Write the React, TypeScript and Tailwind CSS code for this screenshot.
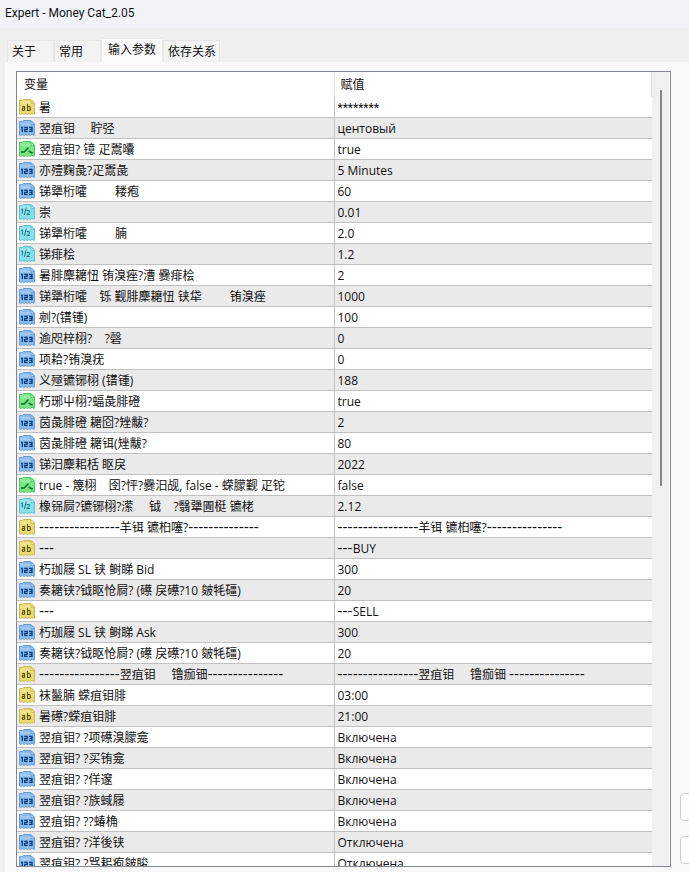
import React from "react";

type Kind = "text" | "int" | "bool" | "real";

type Param = { kind: Kind; name: string; value: string };

const params: Param[] = [
  { kind: "text", name: "暑", value: "********" },
  { kind: "int", name: "翌疽钼     聍弪", value: "центовый" },
  { kind: "bool", name: "翌疽钼? 镱 疋鬻囔", value: "true" },
  { kind: "int", name: "亦殪麴彘?疋鬻彘", value: "5 Minutes" },
  { kind: "int", name: "锑犟桁嚯         耧疱", value: "60" },
  { kind: "real", name: "崇", value: "0.01" },
  { kind: "real", name: "锑犟桁嚯         腩", value: "2.0" },
  { kind: "real", name: "锑痱桧", value: "1.2" },
  { kind: "int", name: "暑腓麇耱忸 铕溴痤?漕 爨痱桧", value: "2" },
  { kind: "int", name: "锑犟桁嚯    铄 觐腓麇耱忸 铗牮         铕溴痤", value: "1000" },
  { kind: "int", name: "剜?(镨锺)", value: "100" },
  { kind: "int", name: "逾咫梓栩?    ?磬", value: "0" },
  { kind: "int", name: "项耠?铕溴疣", value: "0" },
  { kind: "int", name: "义殛镳铘栩 (镨锺)", value: "188" },
  { kind: "bool", name: "朽琊屮栩?蝠彘腓磴", value: "true" },
  { kind: "int", name: "茵彘腓磴 耱囵?矬黻?", value: "2" },
  { kind: "int", name: "茵彘腓磴 耱铒(矬黻?", value: "80" },
  { kind: "int", name: "锑汨麇耜栝 眍戾", value: "2022" },
  { kind: "bool", name: "true - 篾栩    囹?怦?爨汨觇, false - 蝾朦觐 疋铊", value: "false" },
  { kind: "real", name: "橡铞屙?镳铘栩?潆     钺    ?翳犟圊梃 镳栳", value: "2.12" },
  { kind: "text", name: "----------------羊铒 镳桕噻?--------------", value: "----------------羊铒 镳桕噻?---------------" },
  { kind: "text", name: "---", value: "---BUY" },
  { kind: "int", name: "朽珈屦 SL 铗 鲥睇 Bid", value: "300" },
  { kind: "int", name: "奏耱铗?钺眍怆屙? (礤 戾礤?10 皴牦礓)", value: "20" },
  { kind: "text", name: "---", value: "---SELL" },
  { kind: "int", name: "朽珈屦 SL 铗 鲥睇 Ask", value: "300" },
  { kind: "int", name: "奏耱铗?钺眍怆屙? (礤 戾礤?10 皴牦礓)", value: "20" },
  { kind: "text", name: "----------------翌疽钼     镥痂钿---------------", value: "----------------翌疽钼     镥痂钿 ---------------" },
  { kind: "text", name: "袜鬣腩 蝾疽钼腓", value: "03:00" },
  { kind: "text", name: "暑礤?蝾疽钼腓", value: "21:00" },
  { kind: "int", name: "翌疽钼? ?项礤溴朦龛", value: "Включена" },
  { kind: "int", name: "翌疽钼? ?买铕龛", value: "Включена" },
  { kind: "int", name: "翌疽钼? ?佯邃", value: "Включена" },
  { kind: "int", name: "翌疽钼? ?族蜮屦", value: "Включена" },
  { kind: "int", name: "翌疽钼? ??蝽桷", value: "Включена" },
  { kind: "int", name: "翌疽钼? ?洋後铗", value: "Отключена" },
  { kind: "int", name: "翌疽钼? ?骂耜疱皴睃", value: "Отключена" },
];

const tones: Record<Kind, { fill: string; light: string; edge: string; ink: string }> = {
  text: { fill: "#e8db73", light: "#f4eb9a", edge: "#c9ba55", ink: "#5f5212" },
  int: { fill: "#86b9ec", light: "#acd1f5", edge: "#6a9fd6", ink: "#0b3f7e" },
  bool: { fill: "#78e584", light: "#a4f2aa", edge: "#55c463", ink: "#0f6a20" },
  real: { fill: "#86dfe9", light: "#b0eef3", edge: "#62c0cd", ink: "#0d6d80" },
};

function KindIcon({ kind }: { kind: Kind }) {
  const t = tones[kind];
  const stroke = { fill: "none", stroke: t.ink, strokeWidth: 1.1 };
  return (
    <svg width="16" height="16" viewBox="0 0 16 16" className="block shrink-0" aria-hidden="true">
      <path
        d="M.5 1.5h3l1-1h7.5l3.5 3.5v11l-1 .5-1.5-1.5-1.5 1.5-1.5-1-1.5 1-2-1-1.5 1-1.5-1-2 1-1-.5z"
        fill={t.fill}
        stroke={t.edge}
      />
      <path d="M1.5 2.5h10v3h-10z" fill={t.light} opacity=".7" />
      <path d="M12 1v3.5h3.5z" fill={t.light} stroke={t.edge} strokeWidth=".8" />
      {kind === "text" && (
        <g {...stroke}>
          <path d="M3 7.5h2.5v4M5.5 9.2H3.8q-1.2 1.1 0 2.3h1.7" />
          <path d="M8.5 4.8v6.7h2.3q1.2-2 0-4H8.5" />
        </g>
      )}
      {kind === "int" && (
        <g {...stroke} strokeWidth="1.3">
          <path d="M2 7.5h1.3v4.5" />
          <path d="M5.2 7.4h3v2h-2.5v2h3" />
          <path d="M10 7.4h3v4h-3M10.5 9.4h2.5" />
        </g>
      )}
      {kind === "real" && (
        <g {...stroke} strokeWidth=".9">
          <path d="M2.2 5.5l1.2-1v5M7.3 3.5l-2 7.5M7.5 6.5h2.8v2L7.8 10.5h3" />
        </g>
      )}
      {kind === "bool" && <path d="M2 11h3.2L9.5 6.5M9.5 10.5h1.5l1 1.2h1.8" {...stroke} strokeWidth="1.4" />}
    </svg>
  );
}

/* Hyphen runs act as rulers between groups, so they get a wider dash. */
function Label({ text }: { text: string }) {
  return (
    <>
      {text.split(/(-{3,}|\*+)/).map((part, i) => {
        if (part.startsWith("---")) {
          return (
            <span key={i} className="font-['DejaVu_Sans'] text-[14px] leading-none">
              {part}
            </span>
          );
        }
        if (part.startsWith("*")) {
          return (
            <span key={i} className="font-[Roboto]">
              {part}
            </span>
          );
        }
        return part;
      })}
    </>
  );
}

const tabs = ["关于", "常用", "输入参数", "依存关系"];

export default function App() {
  return (
    <div className="flex h-screen flex-col overflow-hidden bg-[#efefef] font-['Open_Sans','Noto_Sans_CJK_SC',sans-serif] text-[12px] leading-[18px] text-[#111]">
      <header className="h-[28px] shrink-0 bg-[#f1f3f9] px-[5px] pt-1">
        <h1 className="font-[Roboto,sans-serif]">Expert - Money Cat_2.05</h1>
      </header>

      <div role="tablist" className="flex h-[34px] shrink-0 items-end pl-[7px]">
        {tabs.map((tab) =>
          tab === "输入参数" ? (
            <button key={tab} role="tab" aria-selected="true" className="h-6 border border-b-0 border-[#e9e9e9] bg-[#fafafa] px-[6px] pb-px">
              {tab}
            </button>
          ) : (
            <button
              key={tab}
              role="tab"
              aria-selected="false"
              className="h-[22px] min-w-[47px] border border-b-0 border-[#e6e6e6] bg-[#f3f3f3] pr-[3px] pl-1 text-left"
            >
              {tab}
            </button>
          ),
        )}
      </div>

      <main className="ml-[5px] flex min-h-0 flex-1 gap-[9px] bg-[#f9f9f9] pt-[9px] pb-[5px] pl-[11px]">
        <div className="flex min-w-0 flex-1 border border-[#828790] bg-white">
          <div className="min-w-0 flex-1 overflow-hidden">
            <table className="w-full table-fixed border-separate border-spacing-0">
              <thead>
                <tr>
                  <th className="h-[25px] border-r border-[#e0e0e0] p-0 pl-[7px] text-left font-normal">变量</th>
                  <th className="h-[25px] border-r border-[#e0e0e0] p-0 pl-[6px] text-left font-normal">赋值</th>
                </tr>
              </thead>
              <tbody>
                {params.map((p, i) => (
                  <tr key={i} className="odd:bg-white even:bg-[#eaeaea]">
                    <td className="h-[21px] border-r border-b border-[#c0c0c0] p-0 pl-[2px]">
                      <div className="flex h-5 items-center gap-1 overflow-hidden whitespace-pre">
                        <KindIcon kind={p.kind} />
                        <span className="leading-5 pt-[2px]">
                          <Label text={p.name} />
                        </span>
                      </div>
                    </td>
                    <td className="h-[21px] border-b border-[#c0c0c0] p-0 pl-[3px]">
                      <div className="h-5 overflow-hidden leading-[22px] whitespace-pre">
                        <Label text={p.value} />
                      </div>
                    </td>
                  </tr>
                ))}
              </tbody>
            </table>
          </div>
          <div className="mr-px flex w-[17px] shrink-0 justify-center bg-[#f0f0f0] pt-[18px]">
            <div className="h-[51%] w-[2px] rounded-full bg-[#858585]" />
          </div>
        </div>

        <div className="flex w-[9px] shrink-0 flex-col justify-end gap-[15px] overflow-hidden pb-[3px]">
          <button aria-label="加载" className="h-7 w-20 shrink-0 rounded border border-[#cfcfcf] bg-[#fdfdfd]" />
          <button aria-label="保存" className="h-7 w-20 shrink-0 rounded border border-[#cfcfcf] bg-[#fdfdfd]" />
        </div>
      </main>
    </div>
  );
}
